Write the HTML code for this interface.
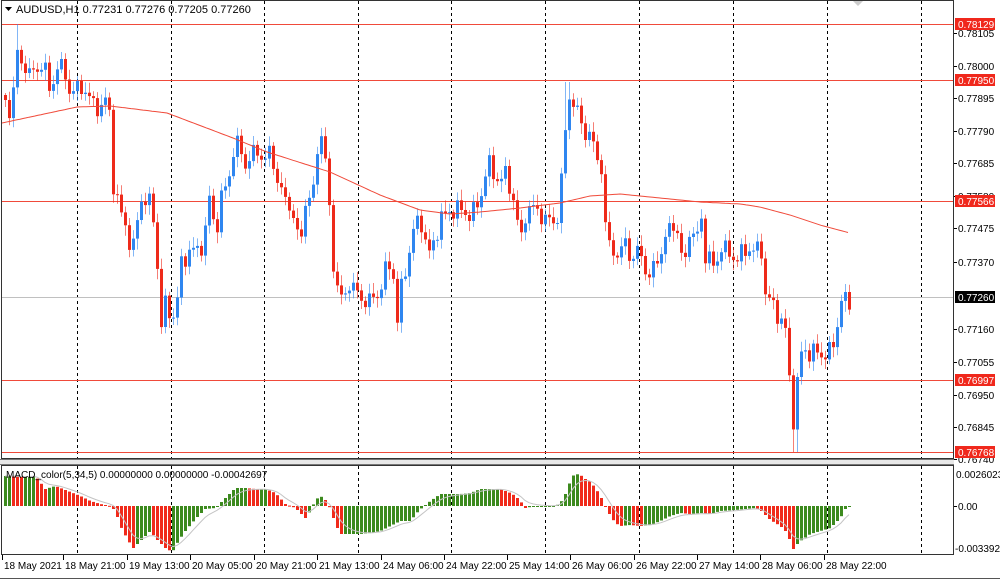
<!DOCTYPE html>
<html><head><meta charset="utf-8">
<style>
html,body{margin:0;padding:0;background:#fff;width:1000px;height:580px;overflow:hidden;font-family:"Liberation Sans",sans-serif}
svg{display:block}
text{font-family:"Liberation Sans",sans-serif}
</style></head>
<body>
<svg id="s" width="1000" height="580" xmlns="http://www.w3.org/2000/svg">
<rect x="0" y="0" width="1000" height="580" fill="#fff"/>
<g id="grid"></g>
<g id="main"></g>
<g id="macd"></g>
<rect x="1.5" y="0.5" width="952" height="458" fill="none" stroke="#333" stroke-width="1"/>
<rect x="0" y="459" width="954" height="6" fill="#e8e8e8"/>
<line x1="0" y1="459.5" x2="954" y2="459.5" stroke="#777"/>
<line x1="0" y1="464.5" x2="954" y2="464.5" stroke="#777"/>
<rect x="1.5" y="465.5" width="952" height="89" fill="none" stroke="#333"/>
<line x1="0" y1="578.5" x2="1000" y2="578.5" stroke="#555"/>
<polygon points="853,1 863,1 858,6" fill="#ccc"/>
<polygon points="5,7 12,7 8.5,11" fill="#000"/>
<text x="16" y="13" font-size="11" fill="#000">AUDUSD,H1  0.77231 0.77276 0.77205 0.77260</text>
<text x="6" y="478" font-size="10" fill="#000">MACD_color(5,34,5) 0.00000000 0.00000000 -0.00042697</text>
<g id="axis" font-size="10" fill="#000"></g>
<g id="time" font-size="10" fill="#000"></g>
</svg>
<script>
(function(){
function interp(p,x){if(x<=p[0][0])return p[0][1];for(var i=1;i<p.length;i++){if(x<=p[i][0]){var a=p[i-1],b=p[i];return a[1]+(b[1]-a[1])*(x-a[0])/(b[0]-a[0]);}}return p[p.length-1][1];}
var h="";
var gx=[77,171,264,358,451,545,639,733,827,921];
gx.forEach(function(x){h+='<line x1="'+(x+.5)+'" y1="1" x2="'+(x+.5)+'" y2="458" stroke="#000" stroke-dasharray="3,3"/>';h+='<line x1="'+(x+.5)+'" y1="466" x2="'+(x+.5)+'" y2="554" stroke="#000" stroke-dasharray="3,3"/>';});
[24,80,201,380,452].forEach(function(y){h+='<line x1="2" y1="'+(y+.5)+'" x2="953" y2="'+(y+.5)+'" stroke="#f04a3a" stroke-width="1"/>';});
h+='<line x1="2" y1="297.5" x2="953" y2="297.5" stroke="#c0c0c0"/>';
document.getElementById("grid").innerHTML=h;

var path=[[5,100],[10,115],[17,55],[30,75],[40,65],[45,70],[50,95],[55,70],[60,65],[65,75],[70,95],[80,85],[90,100],[100,110],[105,100],[110,115],[113,185],[118,205],[125,225],[132,255],[136,225],[140,200],[148,200],[155,225],[160,330],[165,305],[175,320],[180,265],[190,250],[200,250],[205,230],[210,190],[215,240],[220,200],[228,180],[235,140],[240,150],[245,165],[255,150],[265,160],[270,150],[278,185],[285,200],[290,205],[297,235],[300,245],[305,200],[312,200],[318,140],[322,130],[328,195],[333,265],[340,300],[345,295],[350,280],[360,300],[370,300],[378,295],[385,270],[392,265],[397,320],[402,280],[407,265],[412,230],[420,220],[425,240],[430,255],[435,240],[440,215],[450,215],[455,205],[465,215],[475,210],[480,200],[487,160],[495,180],[505,175],[510,190],[515,205],[520,245],[525,215],[530,205],[540,215],[548,220],[556,225],[562,170],[568,95],[572,100],[578,115],[585,135],[590,130],[595,160],[600,155],[605,225],[610,250],[620,255],[625,240],[630,260],[640,250],[645,270],[650,280],[655,260],[660,255],[668,230],[675,220],[680,255],[685,260],[690,220],[695,250],[700,210],[705,255],[710,260],[715,270],[720,245],[730,255],[735,260],[745,250],[762,250],[765,295],[770,300],[775,310],[780,320],[785,330],[790,390],[795,440],[798,355],[805,350],[810,355],[815,350],[820,355],[825,355],[830,350],[835,340],[840,300],[845,300],[850,305]];
var m="";
var prev=95;
for(var i=0;i<212;i++){
 var x=5+4*i;
 var c=interp(path,x)+6*Math.sin(i*1.7)+4*Math.sin(i*3.1);
 var o=prev;
 var bt=Math.min(o,c),bb=Math.max(o,c);
 var hi=bt-(2+5*Math.abs(Math.sin(i*2.3))+4*Math.abs(Math.sin(i*0.7)));
 var lo=bb+(2+5*Math.abs(Math.cos(i*1.9))+4*Math.abs(Math.sin(i*1.1)));
 if(x>=15&&x<=19)hi=24;
 if(x>=792&&x<=797)lo=452;
 if(x>=564&&x<=570)hi=82;
 var up=c<o;
 var col=up?"#2f86f0":"#ee2a1a";
 if(bb-bt<1){bb=bt+1;}
 m+='<line x1="'+(x+.5)+'" y1="'+hi.toFixed(1)+'" x2="'+(x+.5)+'" y2="'+lo.toFixed(1)+'" stroke="'+col+'" stroke-opacity="0.6"/>';
 m+='<rect x="'+(x-1)+'" y="'+bt.toFixed(1)+'" width="3" height="'+(bb-bt).toFixed(1)+'" fill="'+col+'"/>';
 prev=c;
}
var ma=[[2,123],[77,107],[110,106],[167,113],[233,138],[267,152],[330,172],[380,195],[420,210],[450,214],[480,212],[520,208],[560,203],[590,196],[620,194],[660,198],[700,202],[740,204],[760,207],[790,215],[820,225],[850,233]];
var pts=[];for(var xx=2;xx<=850;xx+=3)pts.push(xx+","+interp(ma,xx).toFixed(1));
m+='<polyline points="'+pts.join(" ")+'" fill="none" stroke="#f04a3a" stroke-width="1"/>';
document.getElementById("main").innerHTML=m;

var mh=[[3,30],[10,30],[20,29],[35,30],[45,17],[55,20],[60,18],[70,14],[80,10],[90,5],[100,2],[110,0],[115,-5],[120,-20],[128,-35],[133,-42],[140,-35],[145,-30],[150,-25],[155,-32],[165,-42],[172,-46],[178,-35],[185,-25],[195,-13],[205,-3],[215,-2],[225,8],[235,18],[245,18],[255,17],[265,17],[275,13],[285,2],[295,-2],[305,-12],[310,-5],[315,6],[320,10],[325,6],[330,-3],[335,-18],[340,-28],[350,-28],[360,-28],[370,-27],[380,-25],[390,-20],[400,-15],[410,-15],[418,-5],[425,1],[430,5],[440,12],[450,12],[460,12],[470,13],[480,17],[490,17],[500,17],[505,15],[510,13],[515,10],[520,5],[525,-2],[530,-1],[535,0],[555,0],[560,3],[565,12],[568,20],[572,30],[576,32],[580,31],[585,27],[590,24],[595,18],[600,10],[605,0],[610,-10],[615,-17],[620,-20],[630,-19],[640,-20],[650,-19],[660,-15],[670,-10],[680,-7],[690,-8],[700,-7],[710,-8],[720,-5],[735,-4],[745,-3],[755,-2],[760,-4],[765,-9],[770,-14],[775,-17],[780,-20],[785,-25],[790,-35],[793,-43],[797,-38],[800,-35],[810,-28],[820,-25],[830,-22],[840,-12],[845,-3],[848,-1]];
var z=506,g="",pv=null,sig=null,sp=[];
for(var k=0;k<212;k++){
 var x2=5+4*k;var v=interp(mh,x2);
 var cl=(pv===null||v>=pv)?"#3c8a1e":"#f02a1a";
 var y1=Math.min(z,z-v),hh=Math.abs(v);if(hh<1)hh=1;
 g+='<rect x="'+(x2-1)+'" y="'+y1.toFixed(1)+'" width="3" height="'+hh.toFixed(1)+'" fill="'+cl+'"/>';
 sig=(sig===null)?v:sig+(v-sig)*0.33;
 sp.push(x2+","+(z-sig).toFixed(1));
 pv=v;
}
g+='<polyline points="'+sp.join(" ")+'" fill="none" stroke="#c4c4c4" stroke-width="1"/>';
document.getElementById("macd").innerHTML=g;

var a="";
var labs=[["0.78105",33],["0.78000",66],["0.77895",98],["0.77790",131],["0.77685",163],["0.77580",196],["0.77475",228],["0.77370",262],["0.77160",329],["0.77055",362],["0.76950",395],["0.76845",427],["0.76740",459]];
labs.forEach(function(l){a+='<line x1="954" y1="'+(l[1]+.5)+'" x2="957" y2="'+(l[1]+.5)+'" stroke="#000"/><text x="958" y="'+(l[1]+4)+'">'+l[0]+'</text>';});
var red=[["0.78129",24],["0.77950",80],["0.77566",201],["0.76997",380],["0.76768",452]];
red.forEach(function(l){a+='<rect x="955" y="'+(l[1]-6)+'" width="40" height="12" fill="#f0281c"/><text x="958" y="'+(l[1]+4)+'" fill="#fff">'+l[0]+'</text>';});
a+='<rect x="955" y="291" width="40" height="12" fill="#000"/><text x="958" y="301" fill="#fff">0.77260</text>';
a+='<text x="956" y="478">0.0026023</text><line x1="954" y1="506.5" x2="957" y2="506.5" stroke="#000"/><text x="958" y="510">0.00</text><text x="955" y="552">-0.003392</text>';
document.getElementById("axis").innerHTML=a;
var tl=[["18 May 2021",3],["18 May 21:00",64],["19 May 13:00",128],["20 May 05:00",191],["20 May 21:00",255],["21 May 13:00",318],["24 May 06:00",382],["24 May 22:00",445],["25 May 14:00",508],["26 May 06:00",571],["26 May 22:00",635],["27 May 14:00",698],["28 May 06:00",761],["28 May 22:00",825]];
var t="";
tl.forEach(function(l){t+='<line x1="'+(l[1]-0.5)+'" y1="555" x2="'+(l[1]-0.5)+'" y2="560" stroke="#000"/><text x="'+(l[1]+1)+'" y="569">'+l[0]+'</text>';});
document.getElementById("time").innerHTML=t;
})();
</script>
</body></html>
